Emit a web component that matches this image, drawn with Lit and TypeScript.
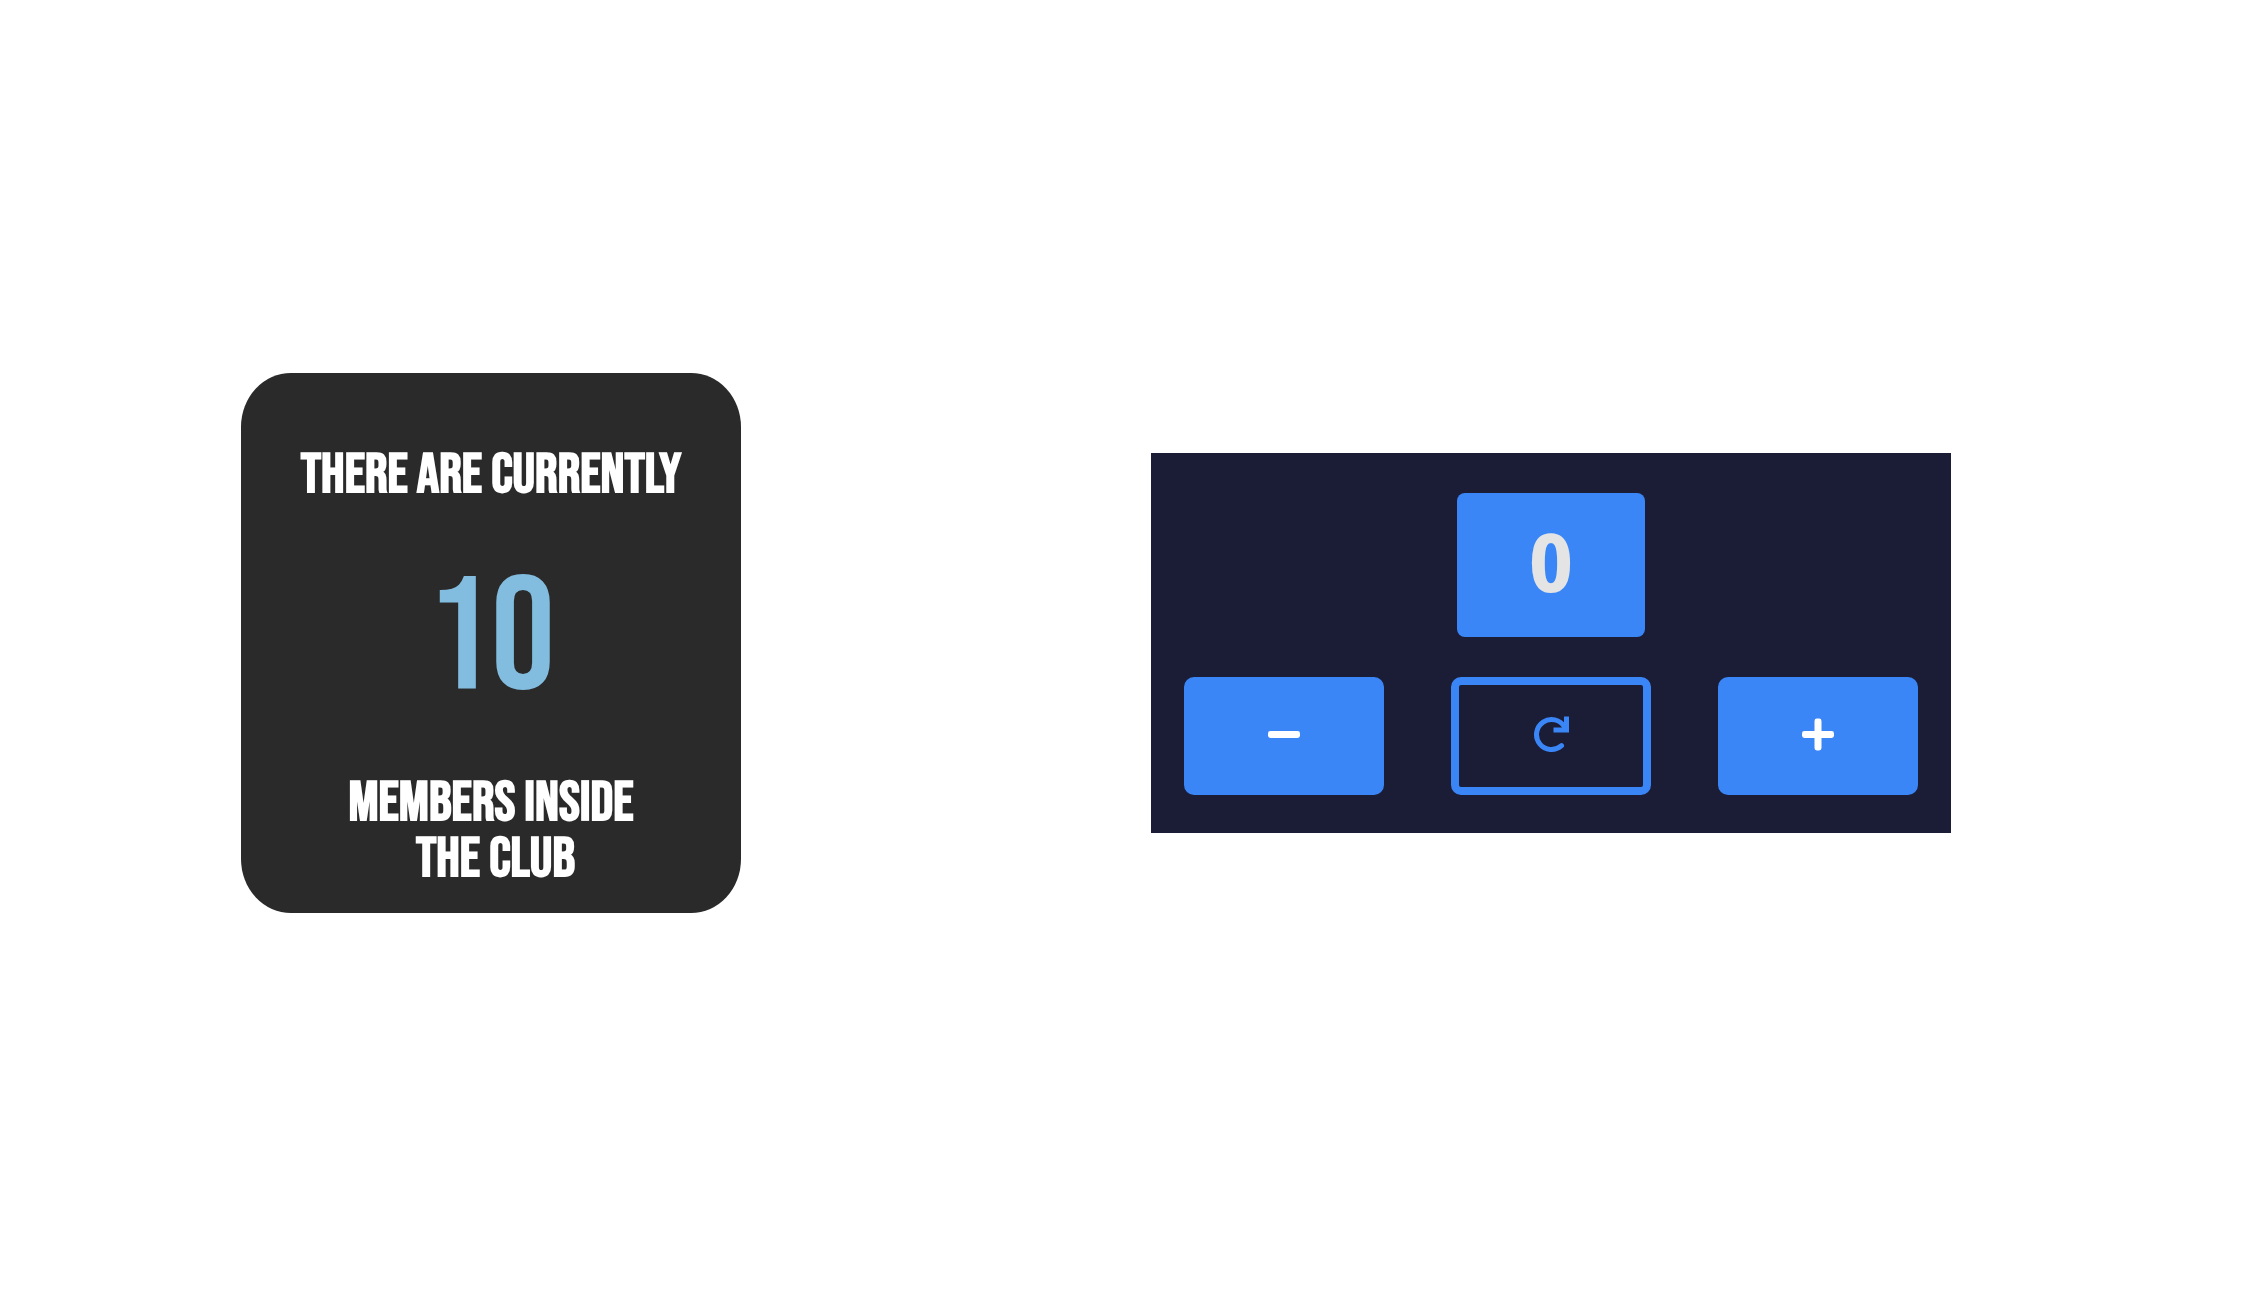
import { LitElement, html, css, svg } from "lit";
import { customElement, property, state } from "lit/decorators.js";

@customElement("club-card")
class ClubCard extends LitElement {
  @property({ type: Number }) members = 0;

  static styles = css`
    :host {
      display: block;
    }
    .card {
      padding: 75px 32px 25px;
      border-radius: 10%;
      background: #2a2a2a;
      color: #fff;
      font-family: "Bebas Neue", "Liberation Sans Narrow", "Liberation Sans", sans-serif;
      text-align: center;
    }
    .line {
      margin: 0;
      font-size: 56px;
      font-weight: 700;
      line-height: 56px;
    }
    .count {
      margin: 40px 0;
      color: #82bddf;
      font-size: 160px;
      font-weight: 400;
      line-height: 192px;
    }
  `;

  render() {
    return html`
      <section class="card">
        <h2 class="line">THERE ARE CURRENTLY</h2>
        <p class="count">${this.members}</p>
        <h2 class="line">MEMBERS INSIDE<br />&nbsp;THE CLUB</h2>
      </section>
    `;
  }
}

const minusIcon = svg`<rect x="4" y="15" width="32" height="7" rx="2.4" />`;
const plusIcon = svg`
  <rect x="4" y="15" width="32" height="7" rx="2.4" />
  <rect x="16.5" y="2.5" width="7" height="32" rx="2.4" />`;
const resetIcon = svg`
  <path
    d="M33.5 11 A15 15 0 1 0 30.5 29.7"
    fill="none"
    stroke="currentColor"
    stroke-width="5"
    stroke-linecap="round"
  />
  <path d="M33 0.5 H38 V16.5 H22.5 V11.5 H33 Z" />`;

@customElement("counter-panel")
class CounterPanel extends LitElement {
  @state() private value = 0;

  static styles = css`
    :host {
      display: block;
    }
    .panel {
      display: flex;
      flex-direction: column;
      align-items: center;
      gap: 40px;
      padding: 40px 0 38px;
      background: #1b1c36;
    }
    .display {
      box-sizing: border-box;
      min-width: 188px;
      padding: 20px 24px 28px;
      border-radius: 8px;
      background: #3b86f7;
      color: #e4e4e4;
      font-family: "Noto Sans Display", "Noto Sans", sans-serif;
      font-size: 80px;
      font-weight: 700;
      line-height: 96px;
      text-align: center;
    }
    .actions {
      display: flex;
      justify-content: space-around;
      align-self: stretch;
    }
    .button {
      display: flex;
      align-items: center;
      justify-content: center;
      box-sizing: border-box;
      width: 200px;
      height: 118px;
      padding: 0;
      border: 8px solid #3b86f7;
      border-radius: 10px;
      background: #3b86f7;
      color: #fff;
      cursor: pointer;
    }
    .outline {
      background: transparent;
      color: #3b86f7;
    }
    .icon {
      display: block;
      width: 40px;
      height: 40px;
      fill: currentColor;
    }
  `;

  render() {
    return html`
      <section class="panel">
        <output class="display">${this.value}</output>
        <div class="actions">
          <button class="button" aria-label="Decrease" @click=${() => this.value--}>
            <svg class="icon" viewBox="0 0 40 40">${minusIcon}</svg>
          </button>
          <button class="button outline" aria-label="Reset" @click=${() => (this.value = 0)}>
            <svg class="icon" viewBox="0 0 40 40">${resetIcon}</svg>
          </button>
          <button class="button" aria-label="Increase" @click=${() => this.value++}>
            <svg class="icon" viewBox="0 0 40 40">${plusIcon}</svg>
          </button>
        </div>
      </section>
    `;
  }
}

@customElement("app-root")
class AppRoot extends LitElement {
  static styles = css`
    :host {
      display: block;
    }
    .page {
      display: grid;
      grid-template-columns: 241fr minmax(0, 500px) 410fr minmax(0, 800px) 309fr;
      align-items: center;
      box-sizing: border-box;
      min-height: 100vh;
      padding-bottom: 8px;
      background: #fff;
    }
    .club {
      grid-column: 2;
    }
    .counter {
      grid-column: 4;
    }
  `;

  render() {
    return html`
      <main class="page">
        <club-card class="club" .members=${10}></club-card>
        <counter-panel class="counter"></counter-panel>
      </main>
    `;
  }
}
